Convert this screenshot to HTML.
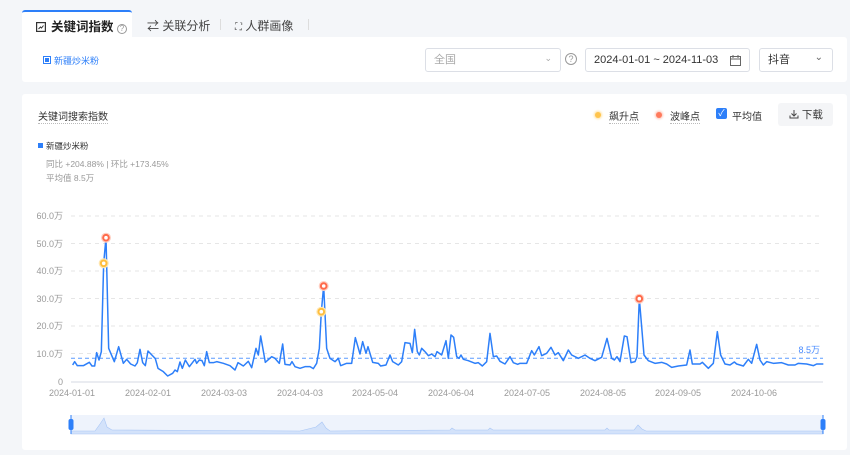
<!DOCTYPE html>
<html><head><meta charset="utf-8"><style>
*{margin:0;padding:0;box-sizing:border-box}
body{width:850px;height:455px;background:#f4f6f9;font-family:"Liberation Sans","Noto Sans CJK SC",sans-serif;position:relative;overflow:hidden;color:#333}
.a{position:absolute;white-space:nowrap}
.panel{position:absolute;background:#fff;border-radius:3px}
.box{position:absolute;border:1px solid #dcdfe6;border-radius:3px;background:#fff;font-size:11px;color:#333;line-height:23px;padding:0 8px}
.gray{color:#999}
</style></head><body>
<div class="a" style="left:22px;top:10px;width:110px;height:28px;background:#fff;border-top:2px solid #2d7ff9;border-radius:3px 3px 0 0"></div>
<div class="a" style="left:36px;top:16px;font-size:12.5px;font-weight:bold;color:#222"><svg width="10" height="10" style="margin-right:5px;vertical-align:-1px"><rect x="0.6" y="0.6" width="8.8" height="8.8" fill="none" stroke="#333" stroke-width="1.2"/><polyline points="2.5,7 4.5,5 5.5,6 7.5,3.5" fill="none" stroke="#333" stroke-width="1"/></svg>关键词指数 <span style="display:inline-block;width:10px;height:10px;border:1px solid #999;border-radius:50%;font-size:8px;line-height:8px;text-align:center;color:#999;font-weight:normal">?</span></div>
<div class="a" style="left:147px;top:17px;font-size:12px;color:#444">⇄ 关联分析</div>
<div class="a" style="left:220px;top:19px;width:1px;height:11px;background:#ddd"></div>
<div class="a" style="left:235px;top:17px;font-size:12px;color:#444"><span style="font-size:10px">⛶</span> 人群画像</div>
<div class="a" style="left:308px;top:19px;width:1px;height:11px;background:#ddd"></div>

<div class="panel" style="left:22px;top:37px;width:825px;height:45px;border-radius:0 3px 3px 3px"></div>
<div class="a" style="left:43px;top:56px;width:8px;height:8px;border:1px solid #2d7ff9;padding:1px"><div style="width:4px;height:4px;background:#2d7ff9"></div></div>
<div class="a" style="left:54px;top:54px;font-size:9px;color:#2d7ff9">新疆炒米粉</div>
<div class="box" style="left:425px;top:48px;width:136px;height:24px;color:#aaa">全国<span style="position:absolute;right:8px;top:-2px;font-size:9px">⌄</span></div>
<div class="a" style="left:565px;top:53px;width:12px;height:12px;border:1px solid #999;border-radius:50%;font-size:9px;line-height:10px;text-align:center;color:#999">?</div>
<div class="box" style="left:585px;top:48px;width:165px;height:24px">2024-01-01 ~ 2024-11-03<svg style="position:absolute;right:8px;top:6px" width="11" height="11"><rect x="0.5" y="1.5" width="10" height="9" fill="none" stroke="#666"/><line x1="0.5" y1="4" x2="10.5" y2="4" stroke="#666"/><line x1="3" y1="0" x2="3" y2="3" stroke="#666"/><line x1="8" y1="0" x2="8" y2="3" stroke="#666"/></svg></div>
<div class="box" style="left:759px;top:48px;width:74px;height:24px">抖音<span style="position:absolute;right:9px;top:-3px;font-size:10px;color:#666">⌄</span></div>

<div class="panel" style="left:22px;top:94px;width:825px;height:356px"></div>
<div class="a" style="left:38px;top:108px;font-size:10px;color:#333;border-bottom:1px dotted #bbb">关键词搜索指数</div>
<div class="a" style="left:595px;top:112px;width:6px;height:6px;border-radius:50%;background:#ffc44d;box-shadow:0 0 2px 1px #ffe2a3"></div>
<div class="a" style="left:609px;top:108px;font-size:10px;border-bottom:1px dotted #bbb">飙升点</div>
<div class="a" style="left:656px;top:112px;width:6px;height:6px;border-radius:50%;background:#ff7a5c;box-shadow:0 0 2px 1px #ffc4b5"></div>
<div class="a" style="left:670px;top:108px;font-size:10px;border-bottom:1px dotted #bbb">波峰点</div>
<div class="a" style="left:716px;top:108px;width:11px;height:11px;border-radius:2px;background:#2d7ff9;color:#fff;font-size:9px;line-height:11px;text-align:center">✓</div>
<div class="a" style="left:732px;top:108px;font-size:10px">平均值</div>
<div class="a" style="left:778px;top:103px;width:55px;height:23px;background:#f4f5f7;border-radius:3px;font-size:10.5px;line-height:25px;padding-left:11px"><svg width="10" height="10" style="vertical-align:-1px"><path d="M5 1V7M2.5 4.5L5 7L7.5 4.5M1 6.5V9H9V6.5" fill="none" stroke="#444" stroke-width="1"/></svg> 下载</div>
<div class="a" style="left:38px;top:143px;width:5px;height:5px;background:#2d7ff9"></div>
<div class="a" style="left:46px;top:140px;font-size:8.5px">新疆炒米粉</div>
<div class="a gray" style="left:46px;top:158px;font-size:8.5px">同比 +204.88% | 环比 +173.45%</div>
<div class="a gray" style="left:46px;top:172px;font-size:8.5px">平均值 8.5万</div>

<svg class="a" style="left:0;top:0" width="850" height="455">
<g stroke="#e6e6e6" stroke-dasharray="4,4" stroke-width="1">
<line x1="71" y1="216" x2="823" y2="216"/><line x1="71" y1="243.5" x2="823" y2="243.5"/><line x1="71" y1="271" x2="823" y2="271"/><line x1="71" y1="298.5" x2="823" y2="298.5"/><line x1="71" y1="326" x2="823" y2="326"/><line x1="71" y1="353.5" x2="823" y2="353.5"/></g>
<line x1="71" y1="382" x2="823" y2="382" stroke="#d5dae3"/>
<g font-size="9" fill="#999" text-anchor="end" font-family="Liberation Sans,Noto Sans CJK SC,sans-serif">
<text x="63" y="219">60.0万</text><text x="63" y="247">50.0万</text><text x="63" y="274">40.0万</text><text x="63" y="302">30.0万</text><text x="63" y="329">20.0万</text><text x="63" y="357">10.0万</text><text x="63" y="385">0</text></g>
<g font-size="9" fill="#999" text-anchor="middle" font-family="Liberation Sans,sans-serif">
<text x="72" y="396">2024-01-01</text><text x="148" y="396">2024-02-01</text><text x="224" y="396">2024-03-03</text><text x="300" y="396">2024-04-03</text><text x="375" y="396">2024-05-04</text><text x="451" y="396">2024-06-04</text><text x="527" y="396">2024-07-05</text><text x="603" y="396">2024-08-05</text><text x="678" y="396">2024-09-05</text><text x="754" y="396">2024-10-06</text></g>
<line x1="71" y1="358.3" x2="823" y2="358.3" stroke="#5b9bff" stroke-dasharray="4,3"/>
<text x="820" y="353" font-size="9" fill="#4a8cff" text-anchor="end" font-family="Liberation Sans,sans-serif">8.5万</text>
<g fill="none" stroke="#2d7ff9" stroke-width="1.5" stroke-linejoin="round">
<polyline transform="translate(0,200) scale(0.33333)" vector-effect="non-scaling-stroke" points="218,495 224,485 232,497 250,497 268,487 276,498 284,498 290,458 297,480 304,455 311,190 318,113 326,445 343,485 356,440 370,490 380,478 392,492 405,498 412,488 420,448 428,488 436,497 444,453 466,476 474,505 490,515 503,528 518,520 525,510 532,515 540,486 547,505 556,480 568,500 585,478 590,490 598,480 606,482 613,497 620,455 628,488 640,488 650,485 670,490 690,497 705,510 714,488 730,498 745,484 755,503 768,445 775,465 782,408 796,487 815,470 825,475 838,490 848,432 855,493 870,495 876,485 885,500 900,505 915,500 930,500 940,506 950,490 958,445 964,335 971,258 980,445 990,475 1005,485 1015,475 1022,497 1040,490 1055,490 1066,413 1080,462 1088,425 1098,460 1104,440 1118,487 1135,490 1142,498 1158,495 1170,465 1178,485 1195,495 1205,485 1215,428 1230,430 1237,458 1244,388 1252,455 1258,465 1265,445 1275,455"/>
<polyline transform="translate(425,200) scale(0.33333)" vector-effect="non-scaling-stroke" points="0,455 10,467 20,462 30,470 36,455 50,465 63,422 70,475 78,405 86,412 95,470 102,475 108,465 115,478 130,482 150,490 160,488 172,498 185,485 195,400 205,470 215,468 225,484 240,492 255,470 265,488 278,493 285,490 305,490 320,452 328,465 342,440 350,467 365,460 378,442 390,465 400,458 415,482 430,450 440,465 460,475 480,465 495,475 510,482 530,472 546,415 560,475 568,480 576,470 585,485 598,408 606,410 618,488 630,485 636,470 643,296 657,465 670,482 690,490 710,487 725,492 740,502 760,498 785,495 795,450 802,492 825,492 832,487 850,505 865,490 877,395 887,465 900,492 915,495 928,486 935,492 955,498 970,478 980,490 995,433 1005,480 1015,495 1025,485 1045,490 1070,488 1090,495 1110,495 1120,490 1145,492 1165,497 1175,492 1195,492"/>
</g>
<g stroke-width="2" fill="#fff">
<circle cx="103.7" cy="263.3" r="5" fill="#ffe6b0" stroke="none"/><circle cx="103.7" cy="263.3" r="2.8" stroke="#ffbe3d"/>
<circle cx="106" cy="237.7" r="5" fill="#ffcfc2" stroke="none"/><circle cx="106" cy="237.7" r="2.8" stroke="#ff6a4a"/>
<circle cx="321.3" cy="311.7" r="5" fill="#ffe6b0" stroke="none"/><circle cx="321.3" cy="311.7" r="2.8" stroke="#ffbe3d"/>
<circle cx="323.7" cy="286" r="5" fill="#ffcfc2" stroke="none"/><circle cx="323.7" cy="286" r="2.8" stroke="#ff6a4a"/>
<circle cx="639.3" cy="298.7" r="5" fill="#ffcfc2" stroke="none"/><circle cx="639.3" cy="298.7" r="2.8" stroke="#ff6a4a"/>
</g>
<rect x="71" y="415" width="752" height="19" fill="#eef3fc"/>
<path d="M71,431 L95,431 L100,424 L104,418 L107,427 L112,430 L300,431 L316,427 L322,422 L326,428 L330,431 L450,430 L452,428 L455,430 L488,430 L490,428 L493,430 L605,430 L607,428 L609,430 L634,430 L638,425 L642,429 L646,431 L822,431 L823,434 L71,434 Z" fill="#d3e2fa" stroke="#a9c6f5" stroke-width="0.6"/>
<line x1="71" y1="415" x2="71" y2="434" stroke="#2d7ff9"/><line x1="823" y1="415" x2="823" y2="434" stroke="#2d7ff9"/>
<rect x="68.5" y="419" width="5" height="11" rx="2" fill="#2d7ff9"/><rect x="820.5" y="419" width="5" height="11" rx="2" fill="#2d7ff9"/>
</svg>
</body></html>
